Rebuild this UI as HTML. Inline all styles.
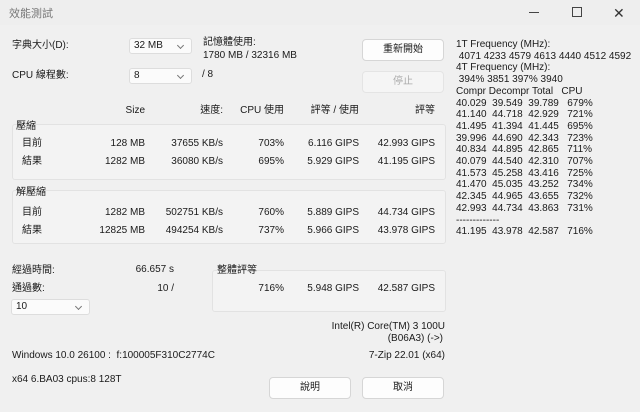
<html><head><style>
body{margin:0;width:640px;height:412px;overflow:hidden;background:#f0f0f0;font-family:"Liberation Sans","Noto Sans CJK TC",sans-serif;font-size:10px;color:#1a1a1a;position:relative}
.a{position:absolute;white-space:nowrap;line-height:12px}
.r{text-align:right}
.box{position:absolute;border:1px solid #e2e2e2;background:#f3f3f3;border-radius:3px}
.dd{position:absolute;background:#fbfbfb;border:1px solid #ddd;border-radius:3px;height:16px;box-sizing:border-box;padding:1px 4px;line-height:12px}
.dd:after{content:"";position:absolute;right:8px;top:4px;width:4px;height:4px;border-right:1px solid #777;border-bottom:1px solid #777;transform:rotate(45deg)}
.btn{position:absolute;background:#fdfdfd;border:1px solid #d6d6d6;border-radius:4px;text-align:center;box-sizing:border-box;line-height:20px}
</style></head><body>
<div class="a" style="left:0;top:0;width:640px;height:25px;background:#eeeeee"></div>
<div class="a" style="left:9px;top:8px;color:#777;font-size:11px">效能測試</div>
<div class="a" style="left:529px;top:12px;width:10px;height:1px;background:#444"></div>
<div class="a" style="left:572px;top:7px;width:8px;height:8px;border:1px solid #444"></div>
<div class="a" style="left:613px;top:5px;font-size:14px;color:#333;line-height:16px">✕</div>

<div class="a" style="left:12px;top:40px">字典大小(D):</div>
<div class="dd" style="left:129px;top:38px;width:63px">32 MB</div>
<div class="a" style="left:203px;top:37px">記憶體使用:</div>
<div class="a" style="left:203px;top:50px">1780 MB / 32316 MB</div>
<div class="btn" style="left:362px;top:39px;width:82px;height:22px">重新開始</div>
<div class="a" style="left:12px;top:70px">CPU 線程數:</div>
<div class="dd" style="left:129px;top:68px;width:63px">8</div>
<div class="a" style="left:202px;top:69px">/ 8</div>
<div class="btn" style="left:362px;top:71px;width:82px;height:22px;color:#aaa;background:#f5f5f5;border-color:#e4e4e4">停止</div>

<div class="a r" style="left:100px;top:105px;width:45px">Size</div>
<div class="a r" style="left:160px;top:105px;width:63px">速度:</div>
<div class="a r" style="left:230px;top:105px;width:54px">CPU 使用</div>
<div class="a r" style="left:290px;top:105px;width:69px">評等 / 使用</div>
<div class="a r" style="left:370px;top:105px;width:65px">評等</div>

<div class="box" style="left:12px;top:124px;width:432px;height:54px"></div>
<div class="a" style="left:16px;top:121px">壓縮</div>
<div class="box" style="left:12px;top:190px;width:432px;height:52px"></div>
<div class="a" style="left:16px;top:187px">解壓縮</div>
<div class="box" style="left:212px;top:270px;width:232px;height:40px"></div>
<div class="a" style="left:217px;top:265px">整體評等</div>

<div class="a" style="left:22px;top:138px">目前</div><div class="a r" style="left:80px;top:138px;width:65px">128 MB</div><div class="a r" style="left:150px;top:138px;width:73px">37655 KB/s</div><div class="a r" style="left:230px;top:138px;width:54px">703%</div><div class="a r" style="left:290px;top:138px;width:69px">6.116 GIPS</div><div class="a r" style="left:360px;top:138px;width:75px">42.993 GIPS</div>
<div class="a" style="left:22px;top:156px">結果</div><div class="a r" style="left:80px;top:156px;width:65px">1282 MB</div><div class="a r" style="left:150px;top:156px;width:73px">36080 KB/s</div><div class="a r" style="left:230px;top:156px;width:54px">695%</div><div class="a r" style="left:290px;top:156px;width:69px">5.929 GIPS</div><div class="a r" style="left:360px;top:156px;width:75px">41.195 GIPS</div>
<div class="a" style="left:22px;top:207px">目前</div><div class="a r" style="left:80px;top:207px;width:65px">1282 MB</div><div class="a r" style="left:150px;top:207px;width:73px">502751 KB/s</div><div class="a r" style="left:230px;top:207px;width:54px">760%</div><div class="a r" style="left:290px;top:207px;width:69px">5.889 GIPS</div><div class="a r" style="left:360px;top:207px;width:75px">44.734 GIPS</div>
<div class="a" style="left:22px;top:225px">結果</div><div class="a r" style="left:80px;top:225px;width:65px">12825 MB</div><div class="a r" style="left:150px;top:225px;width:73px">494254 KB/s</div><div class="a r" style="left:230px;top:225px;width:54px">737%</div><div class="a r" style="left:290px;top:225px;width:69px">5.966 GIPS</div><div class="a r" style="left:360px;top:225px;width:75px">43.978 GIPS</div>

<div class="a" style="left:12px;top:265px">經過時間:</div>
<div class="a r" style="left:120px;top:264px;width:54px">66.657 s</div>
<div class="a" style="left:12px;top:283px">通過數:</div>
<div class="a r" style="left:120px;top:283px;width:54px">10 /</div>
<div class="dd" style="left:11px;top:299px;width:79px">10</div>
<div class="a r" style="left:230px;top:283px;width:54px">716%</div>
<div class="a r" style="left:290px;top:283px;width:69px">5.948 GIPS</div>
<div class="a r" style="left:360px;top:283px;width:75px">42.587 GIPS</div>

<div class="a r" style="left:300px;top:321px;width:145px">Intel(R) Core(TM) 3 100U</div>
<div class="a r" style="left:300px;top:333px;width:143px">(B06A3) (-&gt;)</div>
<div class="a" style="left:12px;top:350px">Windows 10.0 26100 :&nbsp; f:100005F310C2774C</div>
<div class="a r" style="left:300px;top:350px;width:145px">7-Zip 22.01 (x64)</div>
<div class="a" style="left:12px;top:374px">x64 6.BA03 cpus:8 128T</div>
<div class="btn" style="left:269px;top:377px;width:82px;height:22px">說明</div>
<div class="btn" style="left:362px;top:377px;width:82px;height:22px">取消</div>

<div class="a" style="left:456px;top:39px;line-height:11.7px">1T Frequency (MHz):<br>&nbsp;4071 4233 4579 4613 4440 4512 4592<br>4T Frequency (MHz):<br>&nbsp;394% 3851 397% 3940<br>Compr Decompr Total&nbsp;&nbsp; CPU<br>40.029&nbsp; 39.549&nbsp; 39.789&nbsp;&nbsp; 679%<br>41.140&nbsp; 44.718&nbsp; 42.929&nbsp;&nbsp; 721%<br>41.495&nbsp; 41.394&nbsp; 41.445&nbsp;&nbsp; 695%<br>39.996&nbsp; 44.690&nbsp; 42.343&nbsp;&nbsp; 723%<br>40.834&nbsp; 44.895&nbsp; 42.865&nbsp;&nbsp; 711%<br>40.079&nbsp; 44.540&nbsp; 42.310&nbsp;&nbsp; 707%<br>41.573&nbsp; 45.258&nbsp; 43.416&nbsp;&nbsp; 725%<br>41.470&nbsp; 45.035&nbsp; 43.252&nbsp;&nbsp; 734%<br>42.345&nbsp; 44.965&nbsp; 43.655&nbsp;&nbsp; 732%<br>42.993&nbsp; 44.734&nbsp; 43.863&nbsp;&nbsp; 731%<br>-------------<br>41.195&nbsp; 43.978&nbsp; 42.587&nbsp;&nbsp; 716%</div>
</body></html>
